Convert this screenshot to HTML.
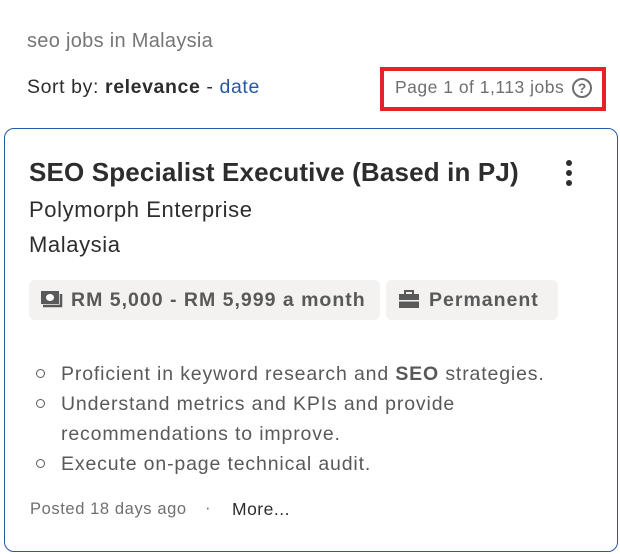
<!DOCTYPE html>
<html><head><style>
body{margin:0;width:620px;height:554px;background:#fff;font-family:"Liberation Sans",sans-serif;position:relative;overflow:hidden}
.a{position:absolute;white-space:nowrap}
.b{position:absolute;left:61px;font-size:19.5px;color:#595959;letter-spacing:0.85px;white-space:nowrap}
.c{position:absolute;left:36px;width:7px;height:7px;border:1.5px solid #595959;border-radius:50%}
</style></head><body>
<div class="a" style="left:27px;top:30px;font-size:20px;color:#767676;letter-spacing:0.3px">seo jobs in Malaysia</div>
<div class="a" style="left:27px;top:76px;font-size:19.5px;color:#2d2d2d;letter-spacing:0.6px">Sort by: <b>relevance</b> - <span style="color:#2557a7">date</span></div>
<div class="a" style="left:380px;top:67px;width:218px;height:36px;border:4px solid #e8202a"></div>
<div class="a" style="left:395px;top:77px;font-size:17.5px;color:#6f6f6f;letter-spacing:0.5px">Page 1 of 1,113 jobs</div>
<div class="a" style="left:572px;top:78px;width:20px;height:20px;border:2px solid #6f6f6f;border-radius:50%;box-sizing:border-box;font-size:14px;font-weight:bold;color:#6f6f6f;text-align:center;line-height:17px">?</div>
<div class="a" style="left:4px;top:128px;width:612px;height:422px;border:1px solid #2557a7;border-radius:10px"></div>
<div class="a" style="left:29px;top:157px;font-size:26px;font-weight:bold;color:#2d2d2d;letter-spacing:0.15px">SEO Specialist Executive (Based in PJ)</div>
<div class="a" style="left:566px;top:160px;width:6px">
<div style="width:6px;height:6px;border-radius:3px;background:#2d2d2d;margin-bottom:4px"></div>
<div style="width:6px;height:6px;border-radius:3px;background:#2d2d2d;margin-bottom:4px"></div>
<div style="width:6px;height:6px;border-radius:3px;background:#2d2d2d"></div></div>
<div class="a" style="left:29px;top:197px;font-size:22px;color:#2d2d2d;letter-spacing:0.6px">Polymorph Enterprise</div>
<div class="a" style="left:29px;top:232px;font-size:22px;color:#2d2d2d;letter-spacing:0.6px">Malaysia</div>
<div class="a" style="left:29px;top:280px;width:351px;height:40px;background:#f3f2f1;border-radius:6px"></div>
<div class="a" style="left:386px;top:280px;width:172px;height:40px;background:#f3f2f1;border-radius:6px"></div>
<svg class="a" style="left:40px;top:289px" width="24" height="22" viewBox="0 0 24 22"><rect x="1" y="2" width="18" height="13" fill="#595959"/><ellipse cx="10" cy="8.5" rx="4" ry="3.5" fill="#fff"/><path d="M3 17h18V5" stroke="#595959" stroke-width="2.5" fill="none"/></svg>
<div class="a" style="left:71px;top:289px;font-size:19.5px;font-weight:bold;color:#595959;letter-spacing:1px">RM 5,000 - RM 5,999 a month</div>
<svg class="a" style="left:398px;top:289px" width="22" height="20" viewBox="0 0 22 20"><path d="M7 5V2h8v3" stroke="#595959" stroke-width="2" fill="none"/><rect x="1" y="5" width="20" height="14" fill="#595959"/><rect x="1" y="11" width="20" height="1.5" fill="#f3f2f1"/></svg>
<div class="a" style="left:429px;top:289px;font-size:19.5px;font-weight:bold;color:#595959;letter-spacing:1px">Permanent</div>
<div class="c" style="top:369px"></div><div class="b" style="top:363px">Proficient in keyword research and <b>SEO</b> strategies.</div>
<div class="c" style="top:399px"></div><div class="b" style="top:393px">Understand metrics and KPIs and provide</div>
<div class="b" style="top:423px">recommendations to improve.</div>
<div class="c" style="top:459px"></div><div class="b" style="top:453px">Execute on-page technical audit.</div>
<div class="a" style="left:30px;top:500px;font-size:16.5px;color:#6f6f6f;letter-spacing:0.6px">Posted 18 days ago</div>
<div class="a" style="left:205px;top:499px;font-size:16.5px;color:#6f6f6f">·</div>
<div class="a" style="left:232px;top:499px;font-size:17.5px;color:#2d2d2d;letter-spacing:0.5px">More...</div>
</body></html>
